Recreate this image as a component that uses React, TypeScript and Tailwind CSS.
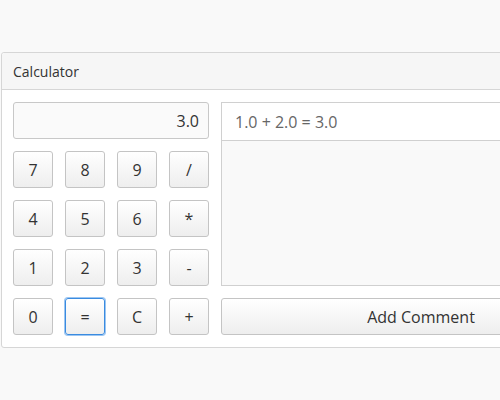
const keys = ["7", "8", "9", "/", "4", "5", "6", "*", "1", "2", "3", "-", "0", "=", "C", "+"];

function Key({ label }: { label: string }) {
  const focused = label === "=";
  return (
    <button
      className={`flex h-[37px] w-[40px] items-center justify-center rounded-[3px] border bg-gradient-to-b from-[#ffffff] to-[#eeeeee] text-[16px] text-[#333] ${
        focused
          ? "border-[#3a8be0] shadow-[0_0_0_1px_#9cc6f2]"
          : "border-[#c4c4c4]"
      }`}
    >
      {label}
    </button>
  );
}

export default function App() {
  return (
    <div
      className="h-[400px] w-[500px] overflow-hidden bg-[#f9f9f9] pt-[52px]"
      style={{ fontFamily: '"Open Sans", "Liberation Sans", sans-serif' }}
    >
      {/* panel */}
      <div className="ml-[1px] w-[640px] rounded-[3px] border border-[#d6d6d6] bg-white">
        <div className="flex h-[37px] items-center rounded-t-[3px] border-b border-[#d6d6d6] bg-[#f6f6f6] pl-[11px] text-[14px] text-[#333]">
          Calculator
        </div>

        <div className="flex gap-[12px] px-[11px] py-[12px]">
          <div className="flex w-[196px] flex-col gap-[12px]">
            <div className="flex h-[37px] items-center justify-end rounded-[3px] border border-[#c8c8c8] bg-[#fafafa] pr-[9px] text-[16px] text-[#333]">
              3.0
            </div>
            <div className="grid grid-cols-4 gap-x-[12px] gap-y-[12px]">
              {keys.map((k) => (
                <Key key={k} label={k} />
              ))}
            </div>
          </div>

          <div className="flex w-[400px] flex-col gap-[12px]">
            <div className="flex h-[184px] flex-col border border-[#d0d0d0] bg-[#f9f9f9]">
              <div className="flex h-[38px] items-center border-b border-[#d0d0d0] bg-white pl-[13px] text-[16px] text-[#666]">
                1.0 + 2.0 = 3.0
              </div>
            </div>
            <button className="flex h-[37px] items-center justify-center rounded-[3px] border border-[#c4c4c4] bg-gradient-to-b from-[#ffffff] to-[#eeeeee] text-[16px] text-[#333]">
              Add Comment
            </button>
          </div>
        </div>
      </div>
    </div>
  );
}
